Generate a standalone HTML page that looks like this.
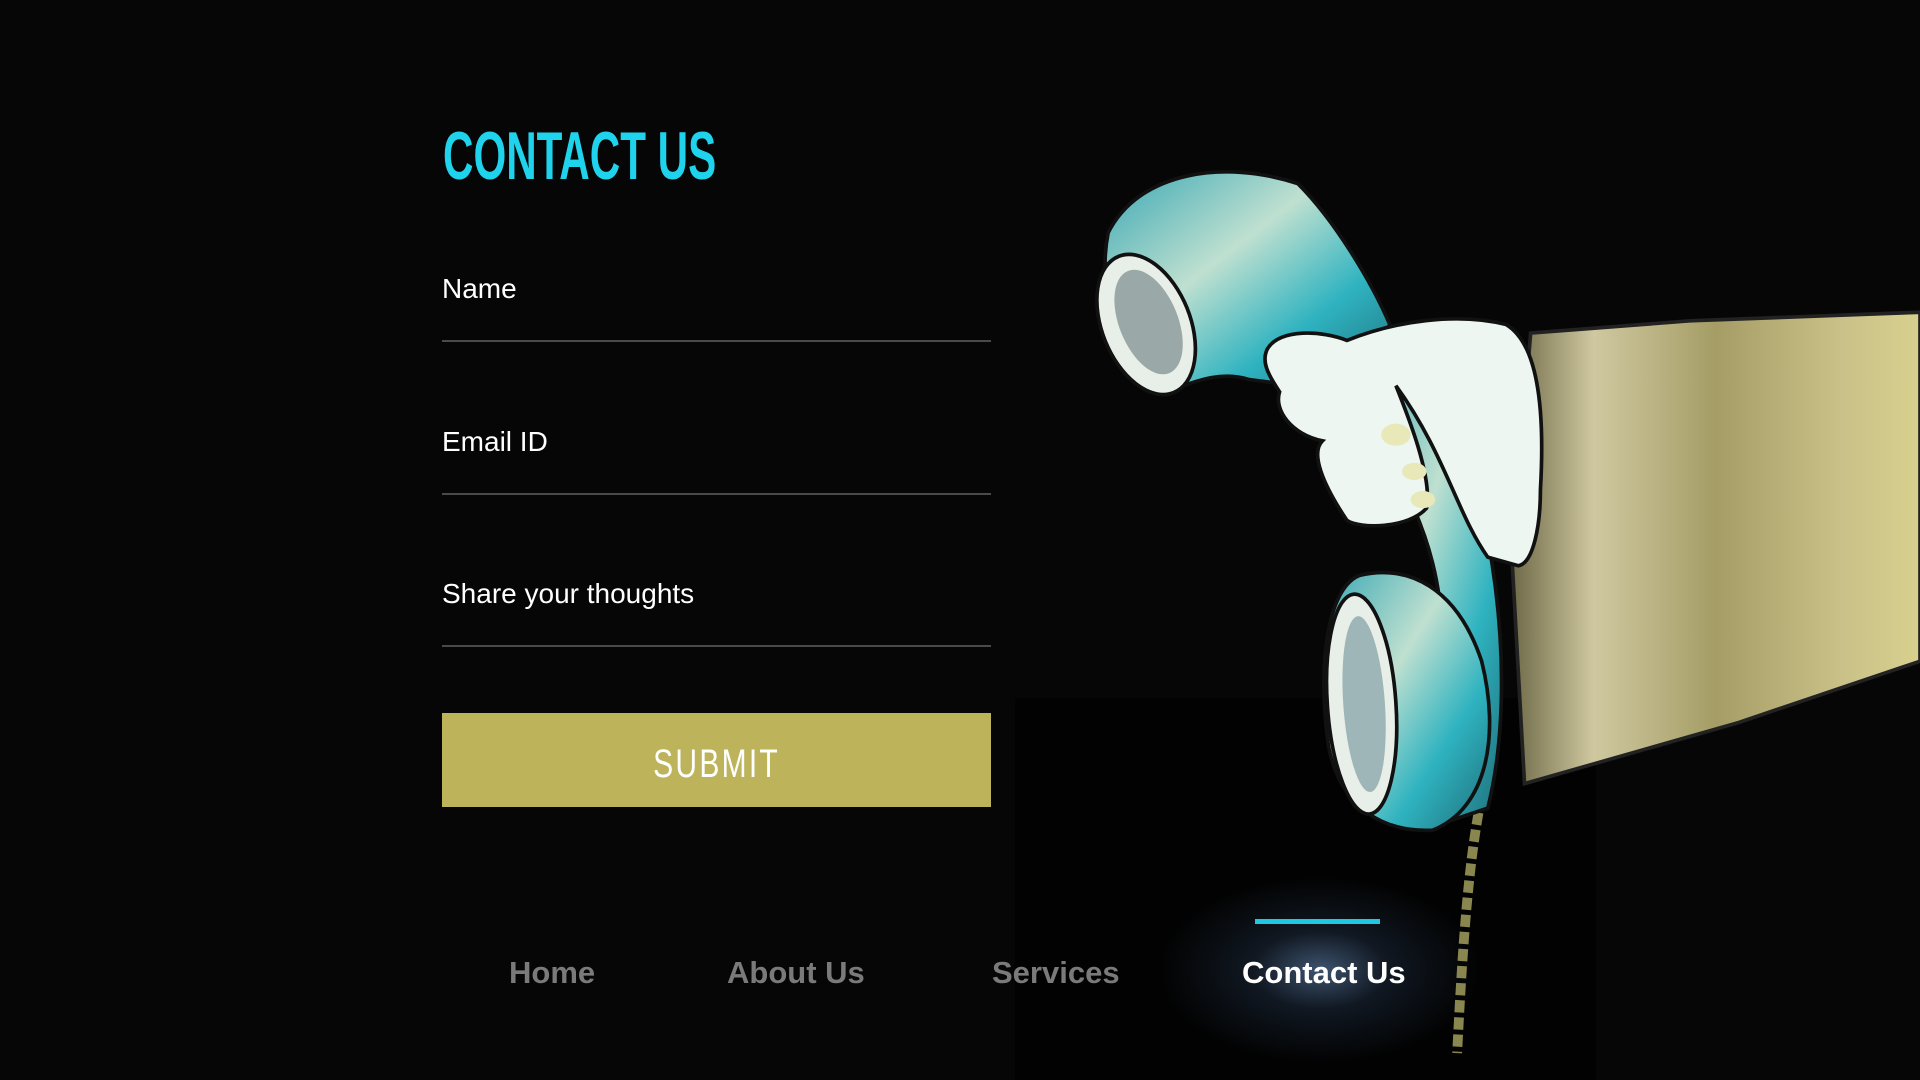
<!DOCTYPE html>
<html><head><meta charset="utf-8"><style>
html,body{margin:0;padding:0;background:#060606;width:1920px;height:1080px;overflow:hidden;font-family:"Liberation Sans",sans-serif;}
.abs{position:absolute;}
.title{left:443px;top:119px;font-size:68px;font-weight:bold;color:#1fd3ec;transform:scaleX(0.62);transform-origin:left top;white-space:nowrap;line-height:74px;}
.lbl{left:442px;font-size:28px;color:#fff;line-height:34px;}
.line{left:442px;width:549px;height:2px;background:#4a4a4a;}
.btn{left:442px;top:713px;width:549px;height:94px;background:#bdb35a;}
.btntxt{left:442px;width:549px;top:740px;text-align:center;font-size:40px;color:#fff;letter-spacing:3px;line-height:48px;}
.btntxt span{display:inline-block;transform:scaleX(0.75);}
.nav{top:953px;font-size:31px;color:#7a7a7a;font-weight:bold;line-height:40px;white-space:nowrap;}
</style></head><body>
<div class="abs" style="left:1015px;top:698px;width:581px;height:382px;background:#020202;"></div>
<div class="abs" style="left:1130px;top:860px;width:380px;height:220px;background:radial-gradient(ellipse at 50% 50%,rgba(110,150,200,0.55) 0%,rgba(60,90,130,0.25) 25%,rgba(0,0,0,0) 60%);"></div>

<svg class="abs" style="left:0;top:0" width="1920" height="1080" viewBox="0 0 1920 1080">
<defs>
<linearGradient id="arm" x1="0" y1="0" x2="1" y2="0"><stop offset="0" stop-color="#6f6a48"/><stop offset="0.2" stop-color="#cfc8a0"/><stop offset="0.5" stop-color="#a59d65"/><stop offset="0.8" stop-color="#c9c088"/><stop offset="1" stop-color="#d8d08e"/></linearGradient>
<linearGradient id="tel" x1="0" y1="0" x2="1" y2="1"><stop offset="0" stop-color="#3aa8b4"/><stop offset="0.4" stop-color="#bfe0d0"/><stop offset="0.7" stop-color="#2fb3c0"/><stop offset="1" stop-color="#1f6f7a"/></linearGradient>
</defs>
<g transform="scale(1.2245)">
<path d="M1250,272 L1380,262 L1568,255 L1568,540 L1420,590 L1245,640 L1235,460 Z" fill="url(#arm)" stroke="#222" stroke-width="3"/>
<path d="M1210,650 C1200,700 1195,760 1190,860" stroke="#8a8650" stroke-width="8" fill="none" stroke-dasharray="10 4"/>
<path d="M905,190 C930,140 1000,130 1060,150 C1090,180 1120,230 1135,265 L1100,320 L1020,310 C990,300 960,320 950,320 C915,300 895,240 905,190 Z" fill="url(#tel)" stroke="#111" stroke-width="3"/>
<ellipse cx="936" cy="265" rx="36" ry="60" transform="rotate(-22 936 265)" fill="#e8efe8" stroke="#111" stroke-width="3"/>
<ellipse cx="938" cy="263" rx="24" ry="45" transform="rotate(-22 938 263)" fill="#9aa8a8"/>
<path d="M1110,300 C1170,330 1200,380 1215,440 C1230,520 1230,600 1215,660 L1170,675 C1180,600 1185,520 1170,460 C1160,420 1140,380 1110,340 Z" fill="url(#tel)" stroke="#111" stroke-width="3"/>
<path d="M1110,470 C1150,460 1190,480 1210,540 C1225,600 1215,660 1170,678 C1130,680 1095,660 1085,610 C1075,540 1085,480 1110,470 Z" fill="url(#tel)" stroke="#111" stroke-width="3"/>
<ellipse cx="1112" cy="575" rx="28" ry="90" transform="rotate(-4 1112 575)" fill="#e8efe8" stroke="#111" stroke-width="3"/>
<ellipse cx="1114" cy="575" rx="17" ry="72" transform="rotate(-4 1114 575)" fill="#9fb6b8"/>
<path d="M1035,285 C1045,268 1080,270 1100,278 C1140,262 1190,255 1230,265 C1255,280 1262,330 1258,400 C1258,430 1252,460 1240,462 L1215,455 C1190,420 1180,370 1140,315 C1150,340 1170,390 1165,415 C1150,432 1110,432 1100,425 C1080,395 1070,370 1080,360 C1055,355 1040,335 1045,320 C1035,305 1030,295 1035,285 Z" fill="#eef6f1" stroke="#111" stroke-width="3"/>
<ellipse cx="1140" cy="355" rx="12" ry="9" fill="#e9e8b8"/>
<ellipse cx="1155" cy="385" rx="10" ry="7" fill="#e9e8b8"/>
<ellipse cx="1162" cy="408" rx="10" ry="7" fill="#e9e8b8"/>
</g>
</svg>

<div class="abs title">CONTACT US</div>
<div class="abs lbl" style="top:272px">Name</div>
<div class="abs line" style="top:340px"></div>
<div class="abs lbl" style="top:425px">Email ID</div>
<div class="abs line" style="top:493px"></div>
<div class="abs lbl" style="top:577px">Share your thoughts</div>
<div class="abs line" style="top:645px"></div>
<div class="abs btn"></div>
<div class="abs btntxt"><span>SUBMIT</span></div>

<div class="abs nav" style="left:509px">Home</div>
<div class="abs nav" style="left:727px">About Us</div>
<div class="abs nav" style="left:992px">Services</div>
<div class="abs nav" style="left:1242px;color:#fff">Contact Us</div>
<div class="abs" style="left:1255px;top:919px;width:125px;height:5px;background:#1fc8e0"></div>
</body></html>
